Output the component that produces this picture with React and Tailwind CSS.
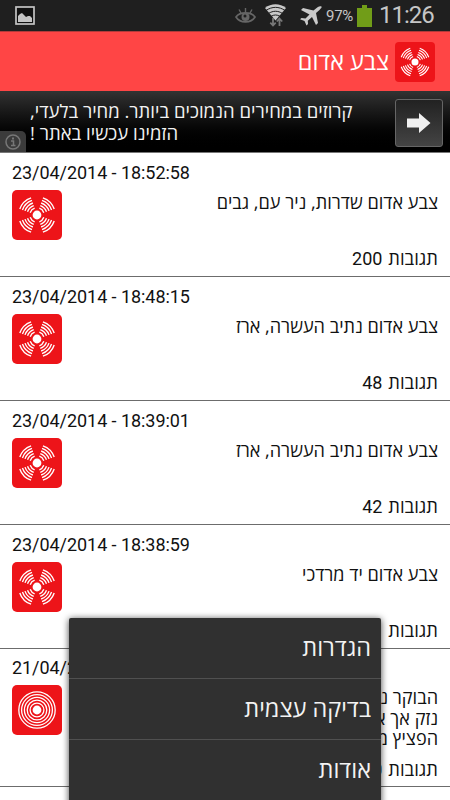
import React from "react";

const HEB = "font-['Open_Sans','Noto_Sans',sans-serif]";

const arc = (r, a0, a1) => {
  const p = (a) => [25 + r * Math.cos((a * Math.PI) / 180), 25 + r * Math.sin((a * Math.PI) / 180)];
  const [x0, y0] = p(a0);
  const [x1, y1] = p(a1);
  return `M${x0.toFixed(2)} ${y0.toFixed(2)}A${r} ${r} 0 0 1 ${x1.toFixed(2)} ${y1.toFixed(2)}`;
};

function AlertIcon({ rings = false, className }) {
  return (
    <svg viewBox="0 0 50 50" className={className}>
      <rect width="50" height="50" rx="5" fill="#ed1419" />
      <circle cx="25" cy="25" r={4.4} fill="#fff" />
      {rings
        ? [6.9, 9.8, 12.6, 15.4, 18.2].map((r) => (
            <circle key={r} cx="25" cy="25" r={r} fill="none" stroke="#fff" strokeWidth="1.3" />
          ))
        : [45, 135, 225, 315].flatMap((a) =>
            [7.2, 10, 12.7, 15.4, 18.2].map((r) => (
              <path key={`${a}-${r}`} d={arc(r, a - 26, a + 26)} fill="none" stroke="#fff" strokeWidth="1.35" />
            ))
          )}
    </svg>
  );
}

function StatusBar() {
  return (
    <div className="flex h-[31px] shrink-0 items-start bg-[#1f1f1f] text-[#c6c6c6]">
      <svg className="ml-[15px] mt-[6px] h-[19px] w-[20px]" viewBox="0 0 20 19">
        <rect x="1" y="1" width="18" height="17" fill="#111" stroke="#c4c4c4" strokeWidth="1.7" />
        <path d="M3 16V10L5 8 7 7 9 9 11 11 13 10 15 10 17 12V16Z" fill="#c4c4c4" />
      </svg>
      <svg className="ml-[200px] mt-[7px] h-[18px] w-[21px]" viewBox="0 0 21 18" fill="none" stroke="#666">
        <path d="M1 10C5 4.500 16 4.500 20 10C16 16.500 5 16.500 1 10Z" strokeWidth="1.7" />
        <circle cx="10.500" cy="10" r="4" fill="#666" stroke="none" />
        <circle cx="10" cy="9" r="1.500" fill="#1f1f1f" stroke="none" />
        <path d="M10.500 1V5M4 2.500L6 6M17 2.500L15 6" strokeWidth="1.400" />
      </svg>
      <svg className="ml-[8px] mt-[3px] h-[25px] w-[24px]" viewBox="0 0 24 25">
        <path d="M1 5C7 0 16 0 22 5L11.500 17.500Z" fill="#c8c8c8" />
        <path d="M2 7.500C8 3.300 15 3.300 21 7.500M4.500 10.500C9 7.500 14 7.500 18.500 10.500M7 13.400C10 11.500 13 11.500 16 13.400" fill="none" stroke="#1f1f1f" strokeWidth="1" />
        <path d="M9 15V22M6.300 19.700L9 22.500 11.700 19.700M15.500 23V16M12.800 18.500L15.500 15.500 18.200 18.500" fill="none" stroke="#777" strokeWidth="1.800" />
      </svg>
      <svg className="ml-[11px] mt-[6px] h-[20px] w-[24px]" viewBox="0 0 24 20">
        <path d="M22.500 .5C20.500-.3 18.500 1 17 2.500L14.500 4.500 4 2 2 4 10.500 8.500 6.500 12.500 2.500 12 1 13.300 5.500 15 7.500 19.500 9 18 8.800 14.800 13 11 17 19 19 17 17 7 20.500 4C22 2.500 23 1.500 22.500 .5Z" fill="#c9c9c9" />
      </svg>
      <span className="ml-[3px] mt-[7px] w-[29px] whitespace-nowrap font-['Roboto',sans-serif] text-[15px] leading-[18px] tracking-[-0.3px]">97%</span>
      <svg className="ml-[2px] mt-[5px] h-[22px] w-[15px]" viewBox="0 0 15 22">
        <path d="M0 3H5V0H10V3H15V22H0Z" fill="#719d18" />
      </svg>
      <span className="ml-[7px] mt-[1px] whitespace-nowrap font-['Roboto',sans-serif] text-[24px] leading-[29px] tracking-[-1px]">11:26</span>
    </div>
  );
}

function Header() {
  return (
    <div dir="rtl" className="flex h-[60px] shrink-0 items-center border-t border-[#b33a3a] bg-[#ff4545] pr-[15px]">
      <AlertIcon className="h-[40px] w-[40px]" />
      <h1 className={`mr-[6px] whitespace-nowrap text-[23.4px] font-normal text-white ${HEB}`}>צבע אדום</h1>
    </div>
  );
}

function Ad() {
  return (
    <div className="relative flex h-[62px] shrink-0 border-b border-[#777] bg-linear-to-b from-[#333] to-black">
      <p dir="rtl" className={`ml-[30px] mt-[9px] w-[323px] whitespace-nowrap text-left text-[18.5px] leading-[21.5px] text-[#f2f2f2] ${HEB}`}>
        קרוזים במחירים הנמוכים ביותר. מחיר בלעדי,
        <br />
        הזמינו עכשיו באתר !
      </p>
      <div className="ml-[42px] mt-[8px] flex h-[48px] w-[48px] items-center justify-center rounded-[3px] border border-[#666] bg-linear-to-b from-[#222] to-[#444]">
        <svg viewBox="0 0 24 20" className="h-[20px] w-[24px]">
          <path d="M0 5.500H12V0L23.500 10 12 20V14.500H0Z" fill="#f0f0f0" />
        </svg>
      </div>
      <div className="absolute bottom-0 left-0 flex h-[21px] w-[26px] items-center justify-center rounded-tr-[5px] bg-[#3b3b3b]">
        <svg viewBox="0 0 16 16" className="h-[16px] w-[16px]">
          <circle cx="8" cy="8" r="7" fill="none" stroke="#777" strokeWidth="1.500" />
          <path d="M6 7H8.500V11.500M6 11.500H10.500" fill="none" stroke="#777" strokeWidth="1.500" />
          <rect x="7" y="3.500" width="2" height="2" fill="#777" />
        </svg>
      </div>
    </div>
  );
}

function Row({ date, lines, count, rings }) {
  return (
    <div className={`flex shrink-0 justify-between border-b border-[#6c6c6c] pl-[12px] pr-[12px] ${rings ? "h-[138px]" : "h-[124px]"}`}>
      <div className="shrink-0">
        <div className={`h-[28px] whitespace-nowrap font-['Roboto',sans-serif] text-[18px] leading-[22px] tracking-[-0.06px] text-[#111] ${rings ? "mt-[8px]" : "mt-[9px]"}`}>{date}</div>
        <AlertIcon rings={rings} className="ml-[0.4px] h-[50px] w-[50px]" />
      </div>
      <div dir="rtl" className={`flex flex-col justify-between whitespace-nowrap text-[18.1px] leading-[20.6px] text-[#111] ${HEB} ${rings ? "pb-[5px] pt-[38px]" : "pb-[6px] pt-[39px]"}`}>
        <div>
          {lines.map((l) => (
            <div key={l}>{l}</div>
          ))}
        </div>
        <div className="text-[18.4px]">
          תגובות <span className="mr-px font-['Roboto',sans-serif] text-[18px]">{count}</span>
        </div>
      </div>
    </div>
  );
}

const ROWS = [
  { date: "23/04/2014 - 18:52:58", lines: ["צבע אדום שדרות, ניר עם, גבים"], count: 200 },
  { date: "23/04/2014 - 18:48:15", lines: ["צבע אדום נתיב העשרה, ארז"], count: 48 },
  { date: "23/04/2014 - 18:39:01", lines: ["צבע אדום נתיב העשרה, ארז"], count: 42 },
  { date: "23/04/2014 - 18:38:59", lines: ["צבע אדום יד מרדכי"], count: 31 },
  { date: "21/04/2014", lines: ["הבוקר נפל", "נזק אך אין", "הפציץ מטוס"], count: 60, rings: true },
  { date: "21/04/2014", lines: [], count: 10 },
];

function Menu() {
  return (
    <div dir="rtl" className={`absolute left-[69px] top-[618px] h-[190px] w-[312px] rounded-t-[2px] bg-[#303030] text-[23.5px] text-[#f3f3f3] shadow-[0_1px_7px_rgba(0,0,0,0.75)] ${HEB}`}>
      {["הגדרות", "בדיקה עצמית", "אודות"].map((t) => (
        <div key={t} className="flex h-[61px] items-center border-b border-[#505050] pr-[10px]">{t}</div>
      ))}
    </div>
  );
}

export default function App() {
  return (
    <div className="relative flex h-[800px] w-[450px] flex-col overflow-hidden bg-white">
      <StatusBar />
      <Header />
      <Ad />
      {ROWS.map((r, i) => (
        <Row key={i} {...r} />
      ))}
      <Menu />
    </div>
  );
}
